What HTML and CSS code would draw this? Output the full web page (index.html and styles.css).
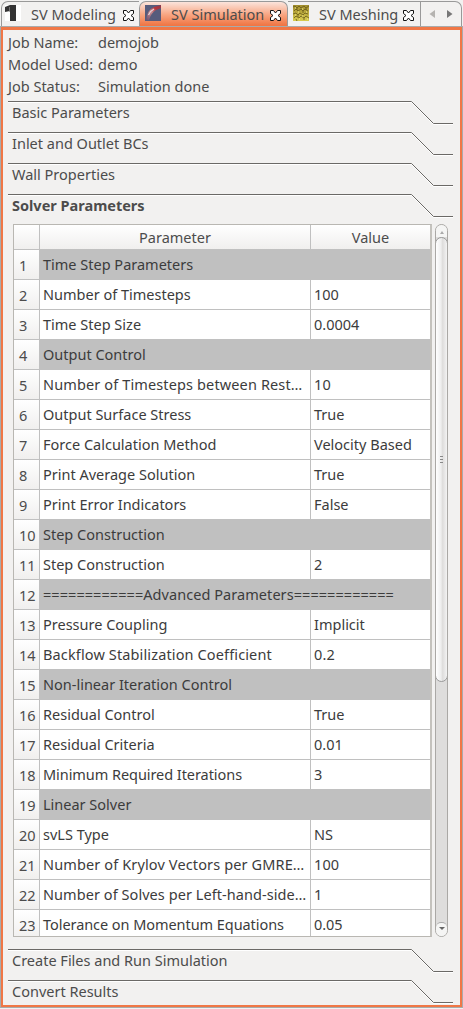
FILE: index.html
```
<!DOCTYPE html>
<html lang="en">
<head>
<meta charset="utf-8">
<title>SV Simulation</title>
<link rel="stylesheet" href="styles.css">
</head>
<body>
<svg class="defs" width="0" height="0">
  <symbol id="close" viewBox="0 0 11 11"><path d="M.5 .5H3.5L5.5 3L7.5 .5H10.5V3.5L8 5.5L10.5 7.5V10.5H7.5L5.5 8L3.5 10.5H.5V7.5L3 5.5L.5 3.5V.5Z" fill="#fff" stroke="#111" stroke-width="1"/></symbol>
  <symbol id="edge" viewBox="0 0 445 25"><path d="M0 2.5H403.500L425.500 24.500H445" fill="none" stroke="#fff"/><path d="M0 1.5H403.500L425.500 23.500H445" fill="none" stroke="#6b6966"/></symbol>
</svg>
<div class="window">
  <div class="tabs">
    <div class="tab first">
      <svg class="icon" width="16" height="16"><rect width="16" height="16" fill="#fff"/><path d="M0 2L5 0H11V16H5V6L0 7Z" fill="#333"/><path d="M4.500 2V7" stroke="#888" stroke-width=".7"/></svg>
      <span class="title">SV Modeling</span><svg class="x" width="11" height="11"><use href="#close"/></svg>
    </div>
    <div class="tab active">
      <svg class="icon" width="16" height="16"><defs><linearGradient id="vessel" x1="0" y1="1" x2="1" y2="0"><stop offset="0" stop-color="#6c5070"/><stop offset=".45" stop-color="#c9888c"/><stop offset=".7" stop-color="#b5343c"/><stop offset="1" stop-color="#8c3a4c"/></linearGradient></defs><rect width="16" height="16" fill="#565b7c"/><path d="M1 15Q2 5 9 2L16 0V3L11 5Q6 8 4 15Z" fill="url(#vessel)"/><path d="M3.500 10Q5 6 9 4" stroke="#e4d5da" stroke-width="1.300" fill="none"/></svg>
      <span class="title">SV Simulation</span><svg class="x" width="11" height="11"><use href="#close"/></svg>
    </div>
    <div class="tab last">
      <svg class="icon" width="16" height="16"><defs><linearGradient id="gold" x2="0" y2="1"><stop stop-color="#a08c2c"/><stop offset="1" stop-color="#d8cc50"/></linearGradient></defs><rect width="16" height="16" fill="url(#gold)"/><path d="M0 2L2 1L4 3L6 1L8 3L11 1L13 3L16 1M1 6L3 4L5 6L8 4L10 6L12 4L15 6M0 9L3 8L5 10L7 8L10 10L12 8L15 9M1 13L3 11L6 13L8 11L11 13L13 11L16 13M4 3V5M10 6V8M5 10V12M11 13V15M3 14L4 16M13 3V5" stroke="#67591b" stroke-width=".8" fill="none"/><path d="M2 3H3M9 4H10M5 7H6M13 7H14M2 10H3M9 11H10M6 14H7M14 14H15" stroke="#f5ed8e"/></svg>
      <span class="title">SV Meshing</span><svg class="x" width="11" height="11"><use href="#close"/></svg>
    </div>
    <div class="arrows"><svg width="40" height="24"><path d="M14 8V16L8.500 12Z" fill="#b5b3b0"/><path d="M26 8V16L31.500 12Z" fill="#777"/></svg></div>
  </div>
  <div class="page">
    <dl class="job"><dt>Job Name:</dt><dd>demojob</dd><dt>Model Used:</dt><dd>demo</dd><dt>Job Status:</dt><dd>Simulation done</dd></dl>
    <div class="section"><svg class="edge" width="445" height="25"><use href="#edge"/></svg><span>Basic Parameters</span></div>
    <div class="section"><svg class="edge" width="445" height="25"><use href="#edge"/></svg><span>Inlet and Outlet BCs</span></div>
    <div class="section"><svg class="edge" width="445" height="25"><use href="#edge"/></svg><span>Wall Properties</span></div>
    <div class="section open"><svg class="edge" width="445" height="25"><use href="#edge"/></svg><span>Solver Parameters</span></div>
    <div class="content">
      <div class="table">
        <div class="row head"><b></b><span>Parameter</span><span>Value</span></div>
        <div class="row group"><b>1</b><span>Time Step Parameters</span></div>
        <div class="row"><b>2</b><span>Number of Timesteps</span><span>100</span></div>
        <div class="row"><b>3</b><span>Time Step Size</span><span>0.0004</span></div>
        <div class="row group"><b>4</b><span>Output Control</span></div>
        <div class="row wide"><b>5</b><span>Number of Timesteps between Rest…</span><span>10</span></div>
        <div class="row"><b>6</b><span>Output Surface Stress</span><span>True</span></div>
        <div class="row"><b>7</b><span>Force Calculation Method</span><span>Velocity Based</span></div>
        <div class="row"><b>8</b><span>Print Average Solution</span><span>True</span></div>
        <div class="row"><b>9</b><span>Print Error Indicators</span><span>False</span></div>
        <div class="row group"><b>10</b><span>Step Construction</span></div>
        <div class="row"><b>11</b><span>Step Construction</span><span>2</span></div>
        <div class="row group slight"><b>12</b><span>============Advanced Parameters============</span></div>
        <div class="row"><b>13</b><span>Pressure Coupling</span><span>Implicit</span></div>
        <div class="row wide"><b>14</b><span>Backflow Stabilization Coefficient</span><span>0.2</span></div>
        <div class="row group"><b>15</b><span>Non-linear Iteration Control</span></div>
        <div class="row"><b>16</b><span>Residual Control</span><span>True</span></div>
        <div class="row"><b>17</b><span>Residual Criteria</span><span>0.01</span></div>
        <div class="row tight"><b>18</b><span>Minimum Required Iterations</span><span>3</span></div>
        <div class="row group"><b>19</b><span>Linear Solver</span></div>
        <div class="row"><b>20</b><span>svLS Type</span><span>NS</span></div>
        <div class="row wide"><b>21</b><span>Number of Krylov Vectors per GMRE…</span><span>100</span></div>
        <div class="row slight"><b>22</b><span>Number of Solves per Left-hand-side…</span><span>1</span></div>
        <div class="row tight"><b>23</b><span>Tolerance on Momentum Equations</span><span>0.05</span></div>
      </div>
      <div class="scroll"><div class="up"></div><div class="thumb"><i></i><i></i><i></i></div><div class="track"></div><div class="down"></div></div>
    </div>
    <div class="section"><svg class="edge" width="445" height="25"><use href="#edge"/></svg><span>Create Files and Run Simulation</span></div>
    <div class="section"><svg class="edge" width="445" height="25"><use href="#edge"/></svg><span>Convert Results</span></div>
  </div>
</div>
</body>
</html>
```
FILE: styles.css
```
* { box-sizing: border-box; }
body { margin: 0; background: #f2f1f0; color: #4c4c4c; font: 14.5px/22px "Noto Sans", "Open Sans", sans-serif; overflow: hidden; }
.defs { position: absolute; }
.window { height: 1009px; padding-top: 1px; }
.tabs { display: flex; height: 26px; padding-left: 1px; width: 462px; }
.tab { display: flex; align-items: flex-start; border-top: 1px solid #999; border-left: 1px solid #999; padding-top: 3px; }
.first { width: 138px; border-radius: 7px 0 0; padding-left: 3px; }
.active { width: 149px; padding-left: 5px; border-right: 1px solid #999; border-radius: 7px 7px 0 0; background: linear-gradient(#fbe4dc, #f8a683 50%, #f07746 92%); }
.last { width: 133px; padding-left: 5px; border-left: 0; border-right: 1px solid #999; }
.icon { flex: none; }
.title { flex: 1; padding-left: 10px; line-height: 19px; white-space: nowrap; }
.x { margin: 5px 6px 0 0; flex: none; }
.first .x { margin-right: 5px; }
.arrows { flex: 1; border: solid #999; border-width: 1px 1px 0 0; border-radius: 0 7px 0 0; }
.page { height: 980px; border: 2px solid #f07746; border-top-width: 3px; margin: 0 1px; padding: 1px 5px 0; outline: 1px solid #aaa; }
.job { display: grid; grid-template-columns: 90px 1fr; margin: 0; height: 69px; align-content: start; }
.job dt, .job dd { margin: 0; height: 22px; white-space: nowrap; }
.section { position: relative; height: 31px; padding: 1px 4px; white-space: nowrap; }
.edge { position: absolute; left: 0; top: 0; }
.open { font-weight: bold; }
.content { display: flex; padding: 0 0 0 5px; height: 724px; gap: 3px; }
.table { width: 419px; height: 713px; overflow: hidden; border: 1px solid #b9b7b2; background: #fff; color: #3c3c3c; border-right: 2px solid #c4c2bd; }
.row { display: grid; grid-template-columns: 26px 271px 1fr; height: 30px; line-height: 29px; }
.row > * { border-right: 1px solid #c0c0c0; border-bottom: 1px solid #c0c0c0; padding-left: 3px; white-space: nowrap; overflow: hidden; }
.row b { font-weight: normal; padding: 1px 0 0 5px; background: linear-gradient(#fff, #f0efee); color: #4c4c4c; }
.row span:last-child { border-right: 0; }
.row.group span { grid-column: 2 / 4; background: #c0c0c0; }
.wide span { letter-spacing: .13px; }
.slight span { letter-spacing: .06px; }
.tight span { letter-spacing: -.06px; }
.head { height: 25px; line-height: 25px; text-align: center; color: #4c4c4c; }
.head > * { background: linear-gradient(#fff, #f0efee); padding: 0; }
.scroll { display: flex; flex-direction: column; width: 13px; height: 713px; border: 1px solid #aaa8a5; border-radius: 7px; overflow: hidden; background: #dedddc; }
.up, .down { height: 12px; background: #f5f5f4; flex: none; }
.up::before { content: ""; display: block; margin: 6px auto 0; width: 0; border: 2px solid transparent; border-top: 0; border-bottom: 3px solid #aaa; }
.up, .down { display: flow-root; }
.thumb { flex: none; height: 445px; margin: 0 -1px; border: 1px solid #999; border-radius: 7px; background: linear-gradient(90deg, #fff, #eee 45%, #dedddc 60%, #f3f3f3); display: flex; flex-direction: column; justify-content: center; align-items: center; gap: 2px; }
.thumb i { width: 3px; height: 1px; background: #888; }
.track { flex: 1; }
.down { height: 14px; border-top: 1px solid #aaa; border-radius: 5px 5px 0 0; }
.down::before { content: ""; display: block; margin: 4px auto 0; width: 0; border: 3px solid transparent; border-bottom: 0; border-top: 3px solid #666; }
```
